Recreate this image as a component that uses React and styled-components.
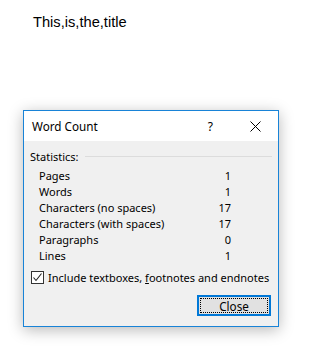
import React from "react";
import styled, { createGlobalStyle } from "styled-components";

const GlobalStyle = createGlobalStyle`
	html, body {
		margin: 0;
		padding: 0;
		background: #fff;
	}
`;

const stats = [
	{ label: "Pages", value: 1 },
	{ label: "Words", value: 1 },
	{ label: "Characters (no spaces)", value: 17 },
	{ label: "Characters (with spaces)", value: 17 },
	{ label: "Paragraphs", value: 0 },
	{ label: "Lines", value: 1 },
];

const App = () => {
	return (
		<Page>
			<GlobalStyle />
			<DocTitle>This,is,the,title</DocTitle>
			<Dialog>
				<TitleBar>
					<TitleText>Word Count</TitleText>
					<HelpButton>?</HelpButton>
					<CloseIcon width="11" height="11" viewBox="0 0 11 11">
						<path d="M0.5 0.5 L10.5 10.5 M10.5 0.5 L0.5 10.5" stroke="#000" strokeWidth="1" fill="none" />
					</CloseIcon>
				</TitleBar>
				<Body>
					<GroupHeader>
						<span>Statistics:</span>
						<GroupLine />
					</GroupHeader>
					<StatsGrid>
						{stats.map((item) => (
							<React.Fragment key={item.label}>
								<StatLabel>{item.label}</StatLabel>
								<StatValue>{item.value}</StatValue>
							</React.Fragment>
						))}
					</StatsGrid>
					<CheckRow>
						<CheckBox>
							<svg width="11" height="11" viewBox="0 0 11 11">
								<path d="M1.5 5.5 L4 8.5 L9.5 1.5" stroke="#222" strokeWidth="1.1" fill="none" />
							</svg>
						</CheckBox>
						<span>
							Include textboxes, <u>f</u>ootnotes and endnotes
						</span>
					</CheckRow>
					<Footer>
						<Button>
							<FocusRect>Close</FocusRect>
						</Button>
					</Footer>
				</Body>
			</Dialog>
		</Page>
	);
};

const Page = styled.div`
	padding-left: 23px;
	width: 322px;
	height: 353px;
	box-sizing: border-box;
	overflow: hidden;
`;

const DocTitle = styled.div`
	font-family: "Liberation Sans", Arial, sans-serif;
	font-size: 14.67px;
	line-height: 17px;
	color: #000;
	padding: 14px 0 0 10px;
	height: 110px;
	box-sizing: border-box;
`;

const Dialog = styled.div`
	width: 256px;
	height: 217px;
	box-sizing: border-box;
	border: 1px solid #1883d7;
	background: #f0f0f0;
	box-shadow: 0 3px 14px rgba(0, 0, 0, 0.28);
	font-family: "Noto Sans", "Segoe UI", sans-serif;
	font-size: 11px;
	color: #000;
	display: flex;
	flex-direction: column;
`;

const TitleBar = styled.div`
	height: 30px;
	background: #fff;
	display: flex;
	align-items: center;
	padding-left: 8px;
	padding-right: 17px;
`;

const TitleText = styled.div`
	flex: 1;
	font-size: 11.7px;
`;

const HelpButton = styled.div`
	font-size: 12px;
	margin-right: 37px;
`;

const CloseIcon = styled.svg`
	display: block;
`;

const Body = styled.div`
	flex: 1;
	padding: 7px 6px 10px 6px;
	display: flex;
	flex-direction: column;
`;

const GroupHeader = styled.div`
	display: flex;
	align-items: center;
	height: 16px;
	gap: 6px;
`;

const GroupLine = styled.div`
	flex: 1;
	height: 1px;
	background: #dcdcdc;
`;

const StatsGrid = styled.div`
	display: grid;
	grid-template-columns: 1fr auto;
	grid-auto-rows: 16px;
	align-items: center;
	width: 192px;
	margin: 3px 0 0 9px;
`;

const StatLabel = styled.div``;

const StatValue = styled.div`
	text-align: right;
`;

const CheckRow = styled.div`
	display: flex;
	align-items: center;
	height: 16px;
	margin: 6px 0 0 1px;
	gap: 4px;
	white-space: nowrap;
`;

const CheckBox = styled.div`
	width: 13px;
	height: 13px;
	flex-shrink: 0;
	box-sizing: border-box;
	border: 1px solid #333;
	background: #fff;
	display: flex;
	align-items: center;
	justify-content: center;
`;

const Footer = styled.div`
	display: flex;
	justify-content: flex-end;
	margin-top: 10px;
	padding-right: 1px;
`;

const Button = styled.div`
	width: 74px;
	height: 21px;
	box-sizing: border-box;
	border: 2px solid #0078d7;
	background: #e1e1e1;
	padding: 1px;
	display: flex;
`;

const FocusRect = styled.div`
	flex: 1;
	border: 1px dotted #000;
	display: flex;
	align-items: center;
	justify-content: center;
	font-size: 11.7px;
`;

export default App;
